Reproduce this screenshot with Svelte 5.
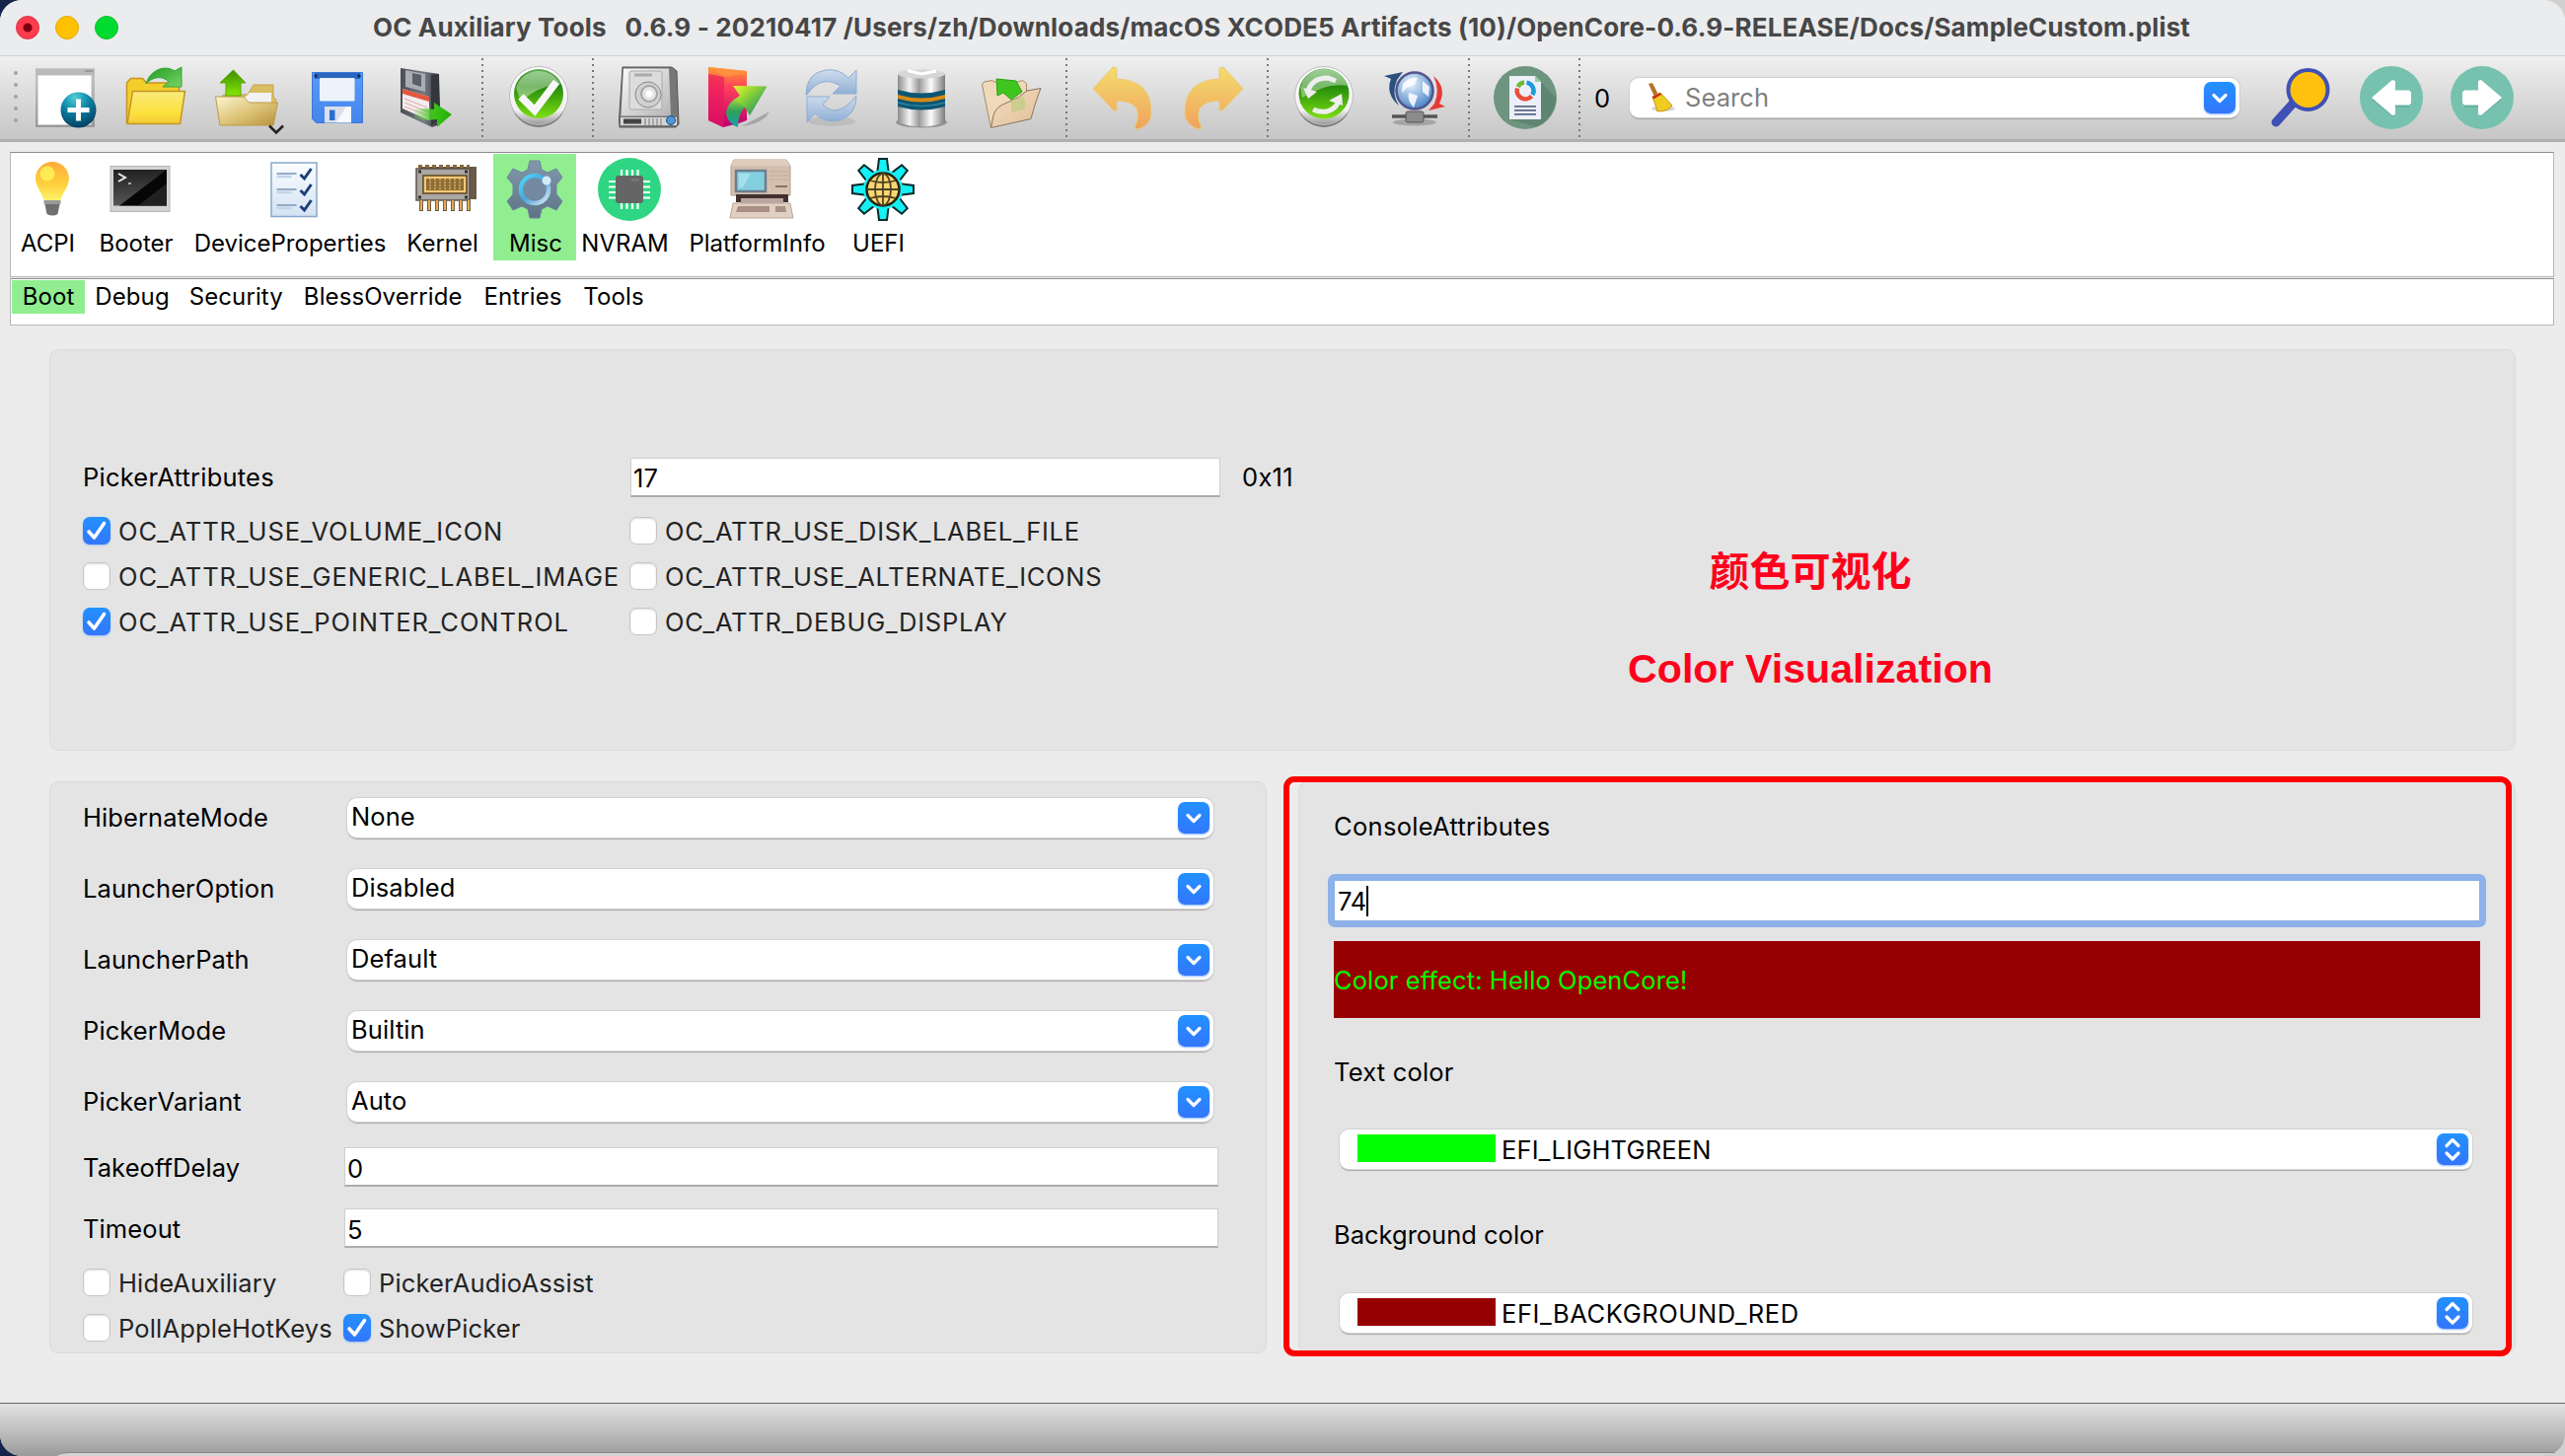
<script>
  const tabs = ['ACPI', 'Booter', 'DeviceProperties', 'Kernel', 'Misc', 'NVRAM', 'PlatformInfo', 'UEFI'];
  const subtabs = ['Boot', 'Debug', 'Security', 'BlessOverride', 'Entries', 'Tools'];
  const attrs = [
    ['OC_ATTR_USE_VOLUME_ICON', true],
    ['OC_ATTR_USE_DISK_LABEL_FILE', false],
    ['OC_ATTR_USE_GENERIC_LABEL_IMAGE', false],
    ['OC_ATTR_USE_ALTERNATE_ICONS', false],
    ['OC_ATTR_USE_POINTER_CONTROL', true],
    ['OC_ATTR_DEBUG_DISPLAY', false]
  ];
  const combos = [
    ['HibernateMode', 'None'],
    ['LauncherOption', 'Disabled'],
    ['LauncherPath', 'Default'],
    ['PickerMode', 'Builtin'],
    ['PickerVariant', 'Auto']
  ];
  const fields = [
    ['TakeoffDelay', '0'],
    ['Timeout', '5']
  ];
  const flags = [
    ['HideAuxiliary', false],
    ['PickerAudioAssist', false],
    ['PollAppleHotKeys', false],
    ['ShowPicker', true]
  ];
</script>

{#snippet check(label, on)}
  <div class="check">
    <span class="box" class:on>
      {#if on}
        <svg viewBox="0 0 28 28"><path d="M6 15l5.500 6L21.500 6.500" fill="none" stroke="#fff" stroke-width="3.600" stroke-linecap="round" stroke-linejoin="round" /></svg>
      {/if}
    </span>
    <span class="clabel">{label}</span>
  </div>
{/snippet}

{#snippet drop()}
  <span class="drop">
    <svg viewBox="0 0 32 32"><path d="M10 13.500l6 6 6-6" fill="none" stroke="#fff" stroke-width="3.200" stroke-linecap="round" stroke-linejoin="round" /></svg>
  </span>
{/snippet}

{#snippet popup(color, name)}
  <div class="popup">
    <span class="swatch {color}"></span>
    <span class="pname {color}name">{name}</span>
    <span class="drop">
      <svg viewBox="0 0 32 32"><path d="M10 12.500l6-6 6 6M10 20l6 6 6-6" fill="none" stroke="#fff" stroke-width="3.200" stroke-linecap="round" stroke-linejoin="round" /></svg>
    </span>
  </div>
{/snippet}

<svg class="defs" aria-hidden="true">
  <defs>
    <linearGradient id="gray" x1="0" y1="0" x2="1" y2="0"><stop offset="0" stop-color="#8d8d8d" /><stop offset=".25" stop-color="#f4f4f4" /><stop offset=".45" stop-color="#9a9a9a" /><stop offset=".7" stop-color="#fdfdfd" /><stop offset="1" stop-color="#7c7c7c" /></linearGradient>
    <linearGradient id="frame" x1="0" y1="0" x2="0" y2="1"><stop offset="0" stop-color="#c8c8c8" /><stop offset="1" stop-color="#999" /></linearGradient>
    <radialGradient id="teal" cx=".4" cy=".15" r=".9"><stop offset="0" stop-color="#4fd0da" /><stop offset=".45" stop-color="#0c83a4" /><stop offset="1" stop-color="#02395c" /></radialGradient>
    <linearGradient id="yellow" x1="0" y1="0" x2="0" y2="1"><stop offset="0" stop-color="#f9ea7c" /><stop offset=".7" stop-color="#fbe03a" /><stop offset="1" stop-color="#f4c93a" /></linearGradient>
    <linearGradient id="green" x1="0" y1="0" x2="1" y2="1"><stop offset="0" stop-color="#1c9a1c" /><stop offset="1" stop-color="#7bd46a" /></linearGradient>
    <linearGradient id="tan" x1="0" y1="0" x2="1" y2="1"><stop offset="0" stop-color="#fbf6cf" /><stop offset=".5" stop-color="#dfc67c" /><stop offset="1" stop-color="#b8923a" /></linearGradient>
    <linearGradient id="up" x1="0" y1="0" x2="0" y2="1"><stop offset="0" stop-color="#3d8f00" /><stop offset="1" stop-color="#86e600" /></linearGradient>
    <linearGradient id="blue" x1="0" y1="0" x2="0" y2="1"><stop offset="0" stop-color="#5b9af6" /><stop offset="1" stop-color="#4385ec" /></linearGradient>
    <linearGradient id="dark" x1="0" y1="0" x2="1" y2="0"><stop offset="0" stop-color="#4a4d55" /><stop offset=".6" stop-color="#777b84" /><stop offset="1" stop-color="#2e3036" /></linearGradient>
    <linearGradient id="go" x1="0" y1="0" x2="1" y2="0"><stop offset="0" stop-color="#7ed66a" stop-opacity=".2" /><stop offset=".5" stop-color="#3fc41c" /><stop offset="1" stop-color="#22ae00" /></linearGradient>
    <linearGradient id="rim" x1="0" y1="0" x2="0" y2="1"><stop offset="0" stop-color="#fff" /><stop offset=".75" stop-color="#f1f1f1" /><stop offset="1" stop-color="#999" /></linearGradient>
    <linearGradient id="orb" x1="0" y1="0" x2="0" y2="1"><stop offset="0" stop-color="#5fae55" /><stop offset=".35" stop-color="#23890b" /><stop offset="1" stop-color="#7ee012" /></linearGradient>
    <linearGradient id="metal" x1="0" y1="0" x2="1" y2="1"><stop offset="0" stop-color="#fafafa" /><stop offset="1" stop-color="#b5b5b5" /></linearGradient>
    <linearGradient id="pink" x1="0" y1="0" x2="0" y2="1"><stop offset="0" stop-color="#ff9a2e" /><stop offset=".35" stop-color="#ff3d5e" /><stop offset="1" stop-color="#b8006e" /></linearGradient>
    <linearGradient id="lime" x1="0" y1="0" x2="1" y2="1"><stop offset="0" stop-color="#eef62a" /><stop offset=".45" stop-color="#7ccb3a" /><stop offset="1" stop-color="#007a80" /></linearGradient>
    <linearGradient id="tail" x1="0" y1="0" x2="0" y2="1"><stop offset="0" stop-color="#b9e23a" /><stop offset=".5" stop-color="#2fa05a" /><stop offset="1" stop-color="#16a3ac" /></linearGradient>
    <linearGradient id="sky" x1="0" y1="0" x2="0" y2="1"><stop offset="0" stop-color="#cfdcec" /><stop offset="1" stop-color="#8eaed6" /></linearGradient>
    <linearGradient id="gold" x1="0" y1="0" x2="0" y2="1"><stop offset="0" stop-color="#f5dc6e" /><stop offset="1" stop-color="#efa25c" /></linearGradient>
    <linearGradient id="paper" x1="0" y1="0" x2="1" y2="1"><stop offset="0" stop-color="#f5dcc0" /><stop offset="1" stop-color="#dfc09a" /></linearGradient>
    <linearGradient id="bulb" x1="0" y1="0" x2="0" y2="1"><stop offset="0" stop-color="#ffab3a" /><stop offset=".6" stop-color="#ffd23e" /><stop offset="1" stop-color="#fff36a" /></linearGradient>
    <linearGradient id="term" x1="0" y1="0" x2="0" y2="1"><stop offset="0" stop-color="#222" /><stop offset="1" stop-color="#555" /></linearGradient>
    <linearGradient id="sheet" x1="0" y1="0" x2="0" y2="1"><stop offset="0" stop-color="#fbfdff" /><stop offset="1" stop-color="#d3e2f3" /></linearGradient>
    <linearGradient id="gearg" x1="0" y1="0" x2="0" y2="1"><stop offset="0" stop-color="#8298ab" /><stop offset="1" stop-color="#5f7387" /></linearGradient>
    <linearGradient id="ringg" x1="0" y1="0" x2="1" y2="1"><stop offset="0" stop-color="#4fd8f7" /><stop offset=".5" stop-color="#49a6dd" /><stop offset="1" stop-color="#dfe9f3" /></linearGradient>
    <radialGradient id="globe" cx=".4" cy=".3" r=".8"><stop offset="0" stop-color="#e8f3fd" /><stop offset="1" stop-color="#3877c0" /></radialGradient>
  </defs>
</svg>

<div class="desktop">
  <div class="window">
    <header class="titlebar">
      <div class="lights"><i class="red"></i><i class="amber"></i><i class="lime"></i></div>
      <h1>OC Auxiliary Tools &nbsp; 0.6.9 - 20210417 /Users/zh/Downloads/macOS XCODE5 Artifacts (10)/OpenCore-0.6.9-RELEASE/Docs/SampleCustom.plist</h1>
    </header>

    <div class="toolbar">
      <div class="grip"><i></i><i></i><i></i><i></i><i></i></div>
      <span class="tool">
        <svg viewBox="0 0 64 64">
          <rect x="2" y="2.500" width="60" height="59.500" fill="url(#frame)" /><rect x="2" y="2.500" width="60" height="7" fill="#b9b9b9" /><path d="M52 5h8" stroke="#8c8c8c" stroke-width="1.500" />
          <rect x="4.500" y="9.500" width="54" height="50" fill="#fff" />
          <circle cx="45.500" cy="44.500" r="18" fill="url(#teal)" /><path d="M45.500 33.500v22M34.500 44.500h22" stroke="#fff" stroke-width="5" />
        </svg>
      </span>
      <span class="tool">
        <svg viewBox="0 0 64 64">
          <path d="M2.500 57V17l4-4.500h12l4 4.500h33v41z" fill="#f3cf2c" stroke="#c79222" stroke-width="1.500" />
          <path d="M8.500 25.500h53L56.500 58.500H3z" fill="url(#yellow)" stroke="#c49423" stroke-width="1.500" />
          <path d="M22 18C26 4 41-2 51 5l7-4v20H39l6-5C39 9 28 11 22 18z" fill="url(#green)" stroke="#36a436" />
        </svg>
      </span>
      <span class="tool">
        <svg viewBox="0 0 64 64">
          <path d="M5 55V32l4-3h24l6-10h20v12l3 3-4 24z" fill="#dbbd62" stroke="#c2a04c" />
          <path d="M29 33l6-6h22v10H29z" fill="#f2f2f2" />
          <path d="M.5 31h28l6 6h29L59 60H5z" fill="url(#tan)" stroke="#bd9a46" />
          <path d="M18.500 4L31 17h-5v13H11V17H5z" fill="url(#up)" stroke="#57a410" />
          <path d="M55 60.500l7 7 7-7" fill="none" stroke="#222" stroke-width="2.500" />
        </svg>
      </span>
      <span class="tool">
        <svg viewBox="0 0 64 64">
          <path d="M6.500 6.500h51v51h-47l-4-4z" fill="url(#blue)" stroke="#3c78d8" />
          <rect x="9" y="7" width="46" height="6" fill="#2a66c0" /><path d="M8.500 8.500h3v3h-3zM52.500 8.500h3v3h-3z" fill="#0c2a60" />
          <rect x="14" y="12" width="35.500" height="23.500" rx="1" fill="#edf3fb" />
          <rect x="19" y="41" width="27" height="16.500" fill="#dbe0ea" /><path d="M31 57l10-16h5v16z" fill="#f7f9fc" /><rect x="24" y="44.500" width="5.500" height="10.500" fill="#2c6fd2" />
        </svg>
      </span>
      <span class="tool">
        <svg viewBox="0 0 64 64">
          <path d="M4 2l39 6 1 33v18L36 62 4 47z" fill="url(#dark)" /><path d="M35 9l8-1v45l-8 8z" fill="#33363d" />
          <path d="M9 4l20 4v18L9 21z" fill="#a9adb4" /><path d="M16 7l9 2v12l-9-3z" fill="#5b5f68" />
          <path d="M6 23l27 8v24L6 43z" fill="#f3eded" /><path d="M6 23l27 8v5L6 28z" fill="#e4573f" />
          <path d="M8 33l23 9M8 37l23 9M8 41l23 9" stroke="#d9a9a4" />
          <path d="M18 44q12-2 20 0v-7l18 12-15 13V54q-12 2-23-1z" fill="url(#go)" />
        </svg>
      </span>
      <span class="sep"></span>
      <span class="tool">
        <svg viewBox="0 0 64 64">
          <ellipse cx="32" cy="34" rx="28" ry="28" fill="#777" /><circle cx="32" cy="30" r="29.500" fill="url(#rim)" stroke="#bbb" /><circle cx="32" cy="28" r="25" fill="url(#orb)" />
          <path d="M9 22a24.500 24.500 0 0 1 45-4q-22 2-40 18z" fill="#fff" opacity=".4" />
          <path d="M14 31l14 14 22-29" fill="none" stroke="#f7f7f7" stroke-width="7.500" />
        </svg>
      </span>
      <span class="sep"></span>
      <span class="tool">
        <svg viewBox="0 0 64 64">
          <path d="M5 1h50l5 4 2 54-3 3H2l-.5-8z" fill="#777" stroke="#555" /><path d="M6 2.500h46l2 48H3.500z" fill="url(#metal)" />
          <rect x="12" y="5" width="33" height="39" rx="2" fill="#dcdcdc" stroke="#aaa" /><path d="M17 9h18" stroke="#aaa" stroke-width="3" />
          <circle cx="31" cy="29" r="13" fill="#d0d0d0" stroke="#888" /><circle cx="32" cy="28" r="8" fill="#e4e4e4" stroke="#a5a5a5" stroke-width="2" /><circle cx="32" cy="28" r="3.500" fill="#fff" />
          <path d="M3 52h57v8H3z" fill="#d5d5d5" /><path d="M6 56h18" stroke="#444" stroke-width="5" /><path d="M28 53v7M32 53v7M36 53v7M40 53v7M44 53v7" stroke="#777" /><circle cx="54" cy="55" r="4.500" fill="#4d95d6" stroke="#1d4f80" />
        </svg>
      </span>
      <span class="tool">
        <svg viewBox="0 0 64 64">
          <path d="M34 61L62 46l-4 6q-10 8-24 9z" fill="#666" opacity=".4" />
          <path d="M0 1l39 4v50l-8 3-16 4L0 55z" fill="url(#pink)" /><path d="M0 8l16 3v51L0 55z" fill="#e8175f" opacity=".65" /><path d="M0 1l39 4-3 3-20 3z" fill="#ff9440" opacity=".8" />
          <path d="M30 62Q19 58 18 47q1-10 14-17l8 9q-10 7-10 23z" fill="url(#tail)" />
          <path d="M25 20l34.500.5L42 50l-5-8-9-7 4-5z" fill="url(#lime)" />
        </svg>
      </span>
      <span class="tool">
        <svg viewBox="0 0 64 64">
          <ellipse cx="33" cy="56" rx="24" ry="5" fill="#777" opacity=".18" />
          <path d="M7 29Q7 7 27 4q13-2 23 8l8-8v24H34l8-8Q22 8 8 29z" fill="url(#sky)" stroke="#8fadd4" />
          <path d="M58 30q0 20-17 25-15 3-25-7l-8 9V31h23l-7 8q15 15 34-9z" fill="url(#sky)" stroke="#8fadd4" />
        </svg>
      </span>
      <span class="tool">
        <svg viewBox="0 0 64 64">
          <ellipse cx="32" cy="57" rx="26" ry="5.500" fill="#777" opacity=".7" /><path d="M8 8v49q24 9 48 0V8z" fill="url(#gray)" />
          <ellipse cx="32" cy="8" rx="24" ry="4.500" fill="#d6d6d6" /><path d="M32 8L18 4.500M32 8l15-3" stroke="#fff" stroke-width="3" />
          <path d="M8 24q24 7 48 0v17q-24 7-48 0z" fill="#0d5673" /><path d="M8 29q24 7 48 0v4q-24 7-48 0z" fill="#d88a12" /><path d="M8 37q24 7 48 0" fill="none" stroke="#2f83a3" stroke-width="1.500" />
        </svg>
      </span>
      <span class="tool">
        <svg viewBox="0 0 64 64">
          <path d="M1.500 19l2-3 8-1.500 4 2 22-.5 5-1.500 4 3v20L10.500 62.500z" fill="#f0d8ba" stroke="#a78a68" />
          <path d="M10.500 62.500L13 50q2-9 14-13 13-5 20-12l14-2.500q-5 12-10 31z" fill="url(#paper)" stroke="#8c735a" stroke-linejoin="round" />
          <path d="M16 13l20 2 6 11-11 8-8-7-6 3z" fill="#3fc61e" stroke="#2ca312" stroke-linejoin="round" /><path d="M31 35l12-4 2 3v10l-14 3z" fill="#b8cc7c" opacity=".6" />
        </svg>
      </span>
      <span class="sep"></span>
      <span class="tool">
        <svg viewBox="0 0 64 64"><path d="M2 23L22 1l4 1v11q36 1 35 36-1 10-13 15l-4-1q12-27-18-28v10h-3z" fill="url(#gold)" stroke="#e8cc7a" /></svg>
      </span>
      <span class="tool">
        <svg viewBox="0 0 64 64"><path d="M62 23L42 1l-4 1v11Q2 14 3 49q1 10 13 15l4-1Q8 36 38 35v10h3z" fill="url(#gold)" stroke="#e8cc7a" /></svg>
      </span>
      <span class="sep"></span>
      <span class="tool">
        <svg viewBox="0 0 64 64">
          <ellipse cx="32" cy="34" rx="28" ry="28" fill="#777" /><circle cx="32" cy="30" r="29.500" fill="url(#rim)" stroke="#bbb" /><circle cx="32" cy="28" r="25.500" fill="url(#orb)" />
          <path d="M8 22a25 25 0 0 1 48-2q-20-4-46 12z" fill="#fff" opacity=".4" />
          <path d="M16 25q4-13 20-13l8 3" fill="none" stroke="#eee" stroke-width="5" /><path d="M11 22l14 4-9 7z" fill="#eee" />
          <path d="M48 32q-2 11-13 14-8 1-14-2" fill="none" stroke="#eee" stroke-width="5" /><path d="M37 35l13-7 1 12z" fill="#eee" />
        </svg>
      </span>
      <span class="tool">
        <svg viewBox="0 0 64 64">
          <path d="M1 10l19-4-6 8q-6 14 2 26-14-12-8-27z" fill="#29507f" /><path d="M51 10q14 12 6 28l6 3-17 4 6-7q6-14-1-28z" fill="#e53a37" />
          <ellipse cx="32" cy="57" rx="22" ry="3.500" fill="#666" opacity=".4" /><path d="M9 51h46" stroke="#555" stroke-width="3.500" /><rect x="23" y="46" width="18" height="11" rx="2" fill="#8b8b8b" stroke="#555" />
          <circle cx="32" cy="25" r="18.500" fill="url(#globe)" stroke="#52548c" stroke-width="2.500" />
          <path d="M20 18q8-8 15-6l-3 7-8 3-5 5zM26 27l9 3-4 12q-7-7-5-15zM40 15l7 6-1 10-6-5z" fill="#fff" opacity=".85" />
        </svg>
      </span>
      <span class="sep"></span>
      <span class="tool">
        <svg viewBox="0 0 64 64">
          <circle cx="32" cy="32" r="32" fill="#6d957f" /><path d="M42 10l21 22a32 32 0 0 1-20 29.500L16 54z" fill="#5d8570" />
          <path d="M16 10h26l6 6v38H16z" fill="#eceff8" /><path d="M42 10v6h6z" fill="#8fd0a0" />
          <path d="M24.600 21A8.500 8.500 0 0 1 31 16.500" fill="none" stroke="#73b62c" stroke-width="4.500" /><path d="M33.500 16.600A8.500 8.500 0 0 1 39.400 29.200" fill="none" stroke="#1f9ad9" stroke-width="4.500" /><path d="M38.500 30.500A8.500 8.500 0 0 1 24 22.500" fill="none" stroke="#e8503a" stroke-width="4.500" />
          <path d="M21 40.800h22M21 44.800h22M21 48.800h22" stroke="#5c6785" stroke-width="1.800" />
        </svg>
      </span>
      <span class="sep"></span>
      <span class="count">0</span>
      <div class="search">
        <svg class="broom" viewBox="0 0 32 32">
          <ellipse cx="18" cy="27" rx="12" ry="3" fill="#777" opacity=".3" /><path d="M3 2l4-1 6 12-4 2z" fill="#b8722a" /><path d="M7 15l8-4 12 13q-4 6-15 6-2-7-5-15z" fill="#f0cc22" stroke="#c79a10" /><path d="M7 15l8-4 1 2-8 4.500z" fill="#c82a1e" />
        </svg>
        <span class="ph">Search</span>
        {@render drop()}
      </div>
      <span class="tool end">
        <svg viewBox="0 0 64 64"><path d="M7 57l18-20" stroke="#3f51b5" stroke-width="9" stroke-linecap="round" /><circle cx="39.500" cy="24" r="20" fill="#ffc10d" stroke="#3f51b5" stroke-width="4" /></svg>
      </span>
      <span class="tool">
        <svg viewBox="0 0 64 64"><circle cx="32" cy="32" r="32" fill="#76c2af" /><path d="M12 34L34 52v-10h16V26H34z" fill="#4f9384" opacity=".35" /><path d="M12 32L33 14l3 1v9.500h14l2 2v11l-2 2H36V49l-3 1z" fill="#fff" /></svg>
      </span>
      <span class="tool">
        <svg viewBox="0 0 64 64"><circle cx="32" cy="32" r="32" fill="#76c2af" /><path d="M52 34L30 52v-10H14V26h16z" fill="#4f9384" opacity=".35" /><path d="M52 32L31 14l-3 1v9.500H14l-2 2v11l2 2h14V49l3 1z" fill="#fff" /></svg>
      </span>
    </div>

    <nav class="tabs">
      {#each tabs as tab}
        <div class="tab" class:active={tab === 'Misc'}>
          <svg viewBox="0 0 64 64">
            {#if tab === 'ACPI'}
              <path d="M32 4c10 0 17 8 17 17 0 8-7 15-8.500 22h-17C22 36 15 29 15 21 15 12 22 4 32 4z" fill="url(#bulb)" /><circle cx="27" cy="16" r="7.500" fill="#ffef55" opacity=".9" />
              <path d="M23.500 43h17v4h-17z" fill="#9a9a9a" /><path d="M24.500 47h15l-2 10q-5 3-11 0z" fill="#6f6f6f" />
            {:else if tab === 'Booter'}
              <rect x="2" y="8.500" width="60" height="46" fill="#d3d3d3" stroke="#b5b5b5" /><rect x="5" y="12" width="54" height="36.500" fill="url(#term)" /><path d="M59 12v36.500H11z" fill="#060606" /><path d="M30 48.500L59 26v22.500z" fill="#333" opacity=".6" />
              <path d="M10 16l7 4-7 4" fill="none" stroke="#eee" stroke-width="2" /><path d="M20 26h3" stroke="#aaa" stroke-width="2" />
            {:else if tab === 'DeviceProperties'}
              <rect x="9" y="5" width="46" height="54.500" fill="url(#sheet)" stroke="#88a7ca" stroke-width="1.500" />
              <path d="M14.500 16h20M14.500 32h20M14.500 48h20" stroke="#91abc9" stroke-width="2" /><path d="M14.500 19h15M14.500 35h15M14.500 51h15" stroke="#c3d4e6" stroke-width="2.500" />
              <path d="M38.500 17l4 4 7-10M38.500 33l4 4 7-10M38.500 49l4 4 7-10" fill="none" stroke="#1d3f78" stroke-width="3" />
            {:else if tab === 'Kernel'}
              <path d="M4 9h58v33H4z" fill="#6a5a49" /><rect x="1" y="11" width="54" height="32" fill="#aaa6a2" stroke="#5d5247" stroke-width="1.500" /><path d="M3 8.500h52" stroke="#8a6a3a" stroke-width="3" stroke-dasharray="4 3" />
              <rect x="8" y="18" width="44" height="18" fill="#f3c878" stroke="#5e4521" stroke-width="1.500" /><rect x="11" y="21" width="38" height="12" fill="#8d6c35" /><path d="M15 21v12M20 21v12M25 21v12M30 21v12M35 21v12M40 21v12M45 21v12" stroke="#dcae61" stroke-width="1.500" stroke-dasharray="2 1" />
              <path d="M3 14h3M50 14h3M3 40h3M50 40h3" stroke="#333" stroke-width="3" />
              <path d="M6 43v11M14 43v11M22 43v11M30 43v11M38 43v11M46 43v11M54 43v11" stroke="#6a5a45" stroke-width="4" /><path d="M6 43v10M14 43v10M22 43v10M30 43v10M38 43v10M46 43v10M54 43v10" stroke="#e5a851" stroke-width="2.200" />
            {:else if tab === 'Misc'}
              <path d="M27 3h10l2 9 6 3 9-4 6 9-6 7v10l6 7-6 9-9-4-6 3-2 9H27l-2-9-6-3-9 4-6-9 6-7V27l-6-7 6-9 9 4 6-3z" fill="url(#gearg)" stroke="#6f8497" stroke-linejoin="round" />
              <circle cx="32" cy="32" r="14" fill="#7289a0" stroke="url(#ringg)" stroke-width="4.500" /><circle cx="44" cy="23" r="4.500" fill="#cfeaf8" />
            {:else if tab === 'NVRAM'}
              <circle cx="32" cy="32" r="32" fill="#2ed582" /><path d="M24 12v40M29.500 12v40M35 12v40M40.500 12v40M11 24h42M11 29.500h42M11 35h42M11 40.500h42" stroke="#fff" stroke-width="2.200" /><rect x="18" y="18" width="28" height="28" rx="3" fill="#656565" /><path d="M34 22.500h8" stroke="#7c7c7c" stroke-width="2" />
            {:else if tab === 'PlatformInfo'}
              <path d="M4 2h53l4 6v30H1V8z" fill="#d4bfae" stroke="#b39c8b" /><path d="M4 2h53l4 6H1z" fill="#dfcdbe" />
              <rect x="6" y="13" width="30" height="21" fill="#83cfe0" stroke="#6e7d8a" stroke-width="2.500" /><path d="M9 16h12l-8 14H9z" fill="#b4e7ee" opacity=".7" />
              <path d="M39 14h20M39 18h20M39 22h20" stroke="#c2ab9a" /><path d="M46 29h12" stroke="#6b5b52" stroke-width="1.500" />
              <path d="M6 37h53v8H6z" fill="#42302f" /><path d="M11 41h43v5H11z" fill="#b9a6a0" /><path d="M3 46h58l3 15H0z" fill="#e0d0c3" stroke="#bda797" /><path d="M8 49h32v6H6zM46 49h10l1 6H46z" fill="#a98f83" />
            {:else}
              <g fill="#14f0f4" stroke="#0a2a2c" stroke-width="2">
                {#each [0, 45, 90, 135, 180, 225, 270, 315] as a}
                  <path d="M26 17L28 1h8l2 16" transform="rotate({a} 32 32)" />
                {/each}
              </g>
              <circle cx="32" cy="32" r="20" fill="#14f0f4" /><circle cx="32" cy="32" r="16.500" fill="#fad673" stroke="#29220f" stroke-width="2.500" />
              <path d="M32 16v32M16 32h32M19 23q13 4 26 0M19 41q13-4 26 0" fill="none" stroke="#4f4220" stroke-width="1.800" /><ellipse cx="32" cy="32" rx="8" ry="16" fill="none" stroke="#4f4220" stroke-width="1.800" />
            {/if}
          </svg>
          <span>{tab}</span>
        </div>
      {/each}
    </nav>

    <nav class="subtabs">
      {#each subtabs as tab, i}
        <span class:active={i === 0}>{tab}</span>
      {/each}
    </nav>

    <main>
      <section class="group picker">
        <div class="pickgrid">
          <span class="label">PickerAttributes</span>
          <div class="pickval"><span class="input">17</span><span class="hex">0x11</span></div>
          {#each attrs as [label, on]}
            {@render check(label, on)}
          {/each}
        </div>
        <div class="note">
          <p class="zh">颜色可视化</p>
          <p class="en">Color Visualization</p>
        </div>
      </section>

      <div class="lower">
        <section class="group form">
          {#each combos as [label, value]}
            <div class="row">
              <span class="label">{label}</span>
              <div class="combo"><span>{value}</span>{@render drop()}</div>
            </div>
          {/each}
          <div class="fields">
            {#each fields as [label, value]}
              <span class="label">{label}</span>
              <span class="input">{value}</span>
            {/each}
          </div>
          <div class="flags">
            {#each flags as [label, on]}
              {@render check(label, on)}
            {/each}
          </div>
        </section>

        <section class="group console">
          <span class="label wide">ConsoleAttributes</span>
          <div class="focus"><span>74</span><i></i></div>
          <div class="effect">Color effect: Hello OpenCore!</div>
          <span class="label text">Text color</span>
          {@render popup('g', 'EFI_LIGHTGREEN')}
          <span class="label back">Background color</span>
          {@render popup('r', 'EFI_BACKGROUND_RED')}
          <div class="callout"></div>
        </section>
      </div>
    </main>

    <footer><div class="behind"></div></footer>
  </div>
</div>

<style>
  :global(body) {
    margin: 0;
  }
  .defs {
    position: absolute;
    width: 0;
    height: 0;
  }
  .desktop {
    width: 2600px;
    height: 1476px;
    background: linear-gradient(90deg, #16244a 0 50%, #d0d0d0 50%);
    overflow: hidden;
    font-family: Inter, 'Noto Sans CJK SC', sans-serif;
    font-size: 25.5px;
    letter-spacing: 0.1px;
    color: #000;
  }
  .desktop * {
    box-sizing: border-box;
  }
  .window {
    display: flex;
    flex-direction: column;
    height: 1476px;
    background: #ececec;
    border-radius: 22px;
    overflow: hidden;
  }
  .titlebar {
    display: flex;
    align-items: center;
    height: 57px;
    flex: none;
    padding-left: 16px;
    background: #ebecee;
    border-bottom: 1px solid #d3d3d3;
  }
  .lights {
    display: flex;
    gap: 16px;
    width: 362px;
    flex: none;
  }
  .lights i {
    width: 24px;
    height: 24px;
    border-radius: 50%;
  }
  .lights .red {
    background: radial-gradient(circle, #7c0010 0 4px, #ff3b4e 5px);
    border: 1px solid #e0293e;
  }
  .lights .amber {
    background: #ffc100;
    border: 1px solid #e2a900;
  }
  .lights .lime {
    background: #00dc2f;
    border: 1px solid #08bd2c;
  }
  h1 {
    margin: -1px 0 0;
    font-size: 26px;
    font-weight: 700;
    line-height: 30px;
    white-space: nowrap;
    color: #474747;
    letter-spacing: 0.15px;
  }
  .toolbar {
    display: flex;
    align-items: center;
    flex: none;
    height: 87px;
    background: linear-gradient(#efefef, #c6c6c6);
    border-bottom: 3px solid #b0b0b0;
  }
  .grip {
    display: flex;
    flex-direction: column;
    gap: 8px;
    width: 20px;
    padding-left: 14px;
    margin-top: -2px;
  }
  .grip i {
    width: 4px;
    height: 4px;
    border-radius: 50%;
    background: #a2a2a2;
  }
  .tool {
    display: flex;
    justify-content: center;
    width: 92px;
    flex: none;
  }
  .tool svg,
  .tab svg {
    width: 64px;
    height: 64px;
    overflow: visible;
    flex: none;
  }
  .sep {
    width: 20px;
    height: 80px;
    flex: none;
    background: repeating-linear-gradient(#777 0 2px, transparent 2px 6px) 8px 0 / 2px 80px no-repeat;
  }
  .count {
    width: 40px;
    padding-left: 4px;
    text-align: left;
    flex: none;
  }
  .search {
    display: flex;
    align-items: center;
    width: 618px;
    height: 40px;
    padding: 0 4px 0 16px;
    border-radius: 9px;
    background: #fff;
    box-shadow: 0 0 0 1px #cdcdcd, 0 2px 1px #a5a5a5;
    color: #7f7f7f;
    margin-top: -1px;
  }
  .broom {
    width: 32px;
    height: 32px;
    margin-right: 8px;
  }
  .ph {
    flex: 1;
  }
  .end {
    margin-left: 16px;
  }
  .drop {
    width: 32px;
    height: 32px;
    flex: none;
    border-radius: 7px;
    background: linear-gradient(#2391ff, #3376fb);
    box-shadow: 0 1px 2px #8ab8ff;
  }
  .drop svg,
  .box svg {
    display: block;
  }
  .tabs,
  .subtabs {
    display: grid;
    margin: 0 11px 0 10px;
    background: #fff;
    border: 1px solid #b7b7b7;
    border-top: 1px solid #8c8c8c;
    font-size: 24px;
    letter-spacing: 0;
    padding-left: 1px;
    flex: none;
  }
  .tabs {
    grid-template-columns: 73px 106px 206px 103px 84px 99px 169px 77px;
    height: 127px;
    margin-top: 10px;
    padding-top: 1px;
  }
  .tab {
    display: flex;
    flex-direction: column;
    align-items: center;
    height: 108px;
    padding-top: 4px;
  }
  .tab svg {
    margin-left: 8px;
  }
  .tab span {
    margin-top: 8px;
    line-height: 30px;
  }
  .active {
    background: #90ee90;
  }
  .tab.active svg {
    margin-left: 0;
  }
  .tab.active span {
    padding-left: 2px;
  }
  .subtabs {
    grid-template-columns: 74px 96px 114.5px 183.5px 100px 84px;
    height: 48px;
    margin-top: 1px;
    padding-top: 1px;
    letter-spacing: 0.1px;
  }
  .subtabs span {
    height: 34px;
    line-height: 34px;
    text-align: center;
  }
  main {
    padding: 24px 50px 0;
    flex: 1;
  }
  .group {
    background: #e4e4e4;
    border: 1px solid #dadada;
    border-radius: 9px;
  }
  .picker {
    display: flex;
    height: 407px;
    padding: 108px 0 0 33px;
  }
  .pickgrid {
    display: grid;
    grid-template-columns: 554px 660px;
    grid-template-rows: 52px 46px 46px 46px;
    align-content: start;
    flex: none;
    white-space: nowrap;
  }
  .pickval {
    display: flex;
    align-items: center;
    height: 41px;
    padding-left: 1px;
  }
  .pickgrid > .label {
    line-height: 41px;
    letter-spacing: 0.22px;
  }
  .input {
    height: 40px;
    line-height: 40px;
    background: #fff;
    border: 1px solid #cfcfcf;
    border-bottom: 2px solid #acacac;
    padding-left: 2px;
  }
  .pickval .input {
    width: 598px;
    flex: none;
  }
  .hex {
    margin-left: 22px;
    letter-spacing: 0.3px;
  }
  .check {
    display: flex;
    align-items: center;
    height: 46px;
    color: #232323;
    white-space: nowrap;
  }
  .pickgrid .check:nth-child(odd) {
    letter-spacing: 0.92px;
  }
  .pickgrid .check:nth-child(even) {
    letter-spacing: 0.73px;
  }
  .box {
    width: 28px;
    height: 28px;
    flex: none;
    margin-right: 8px;
    border-radius: 7px;
    background: #fff;
    border: 1px solid #c6c6c6;
    box-shadow: inset 0 1px 2px #ddd;
  }
  .box.on {
    border: 0;
    background: linear-gradient(#2391ff, #3376fb);
    box-shadow: 0 1px 2px #9cc0f5;
  }
  .note {
    margin-left: 327px;
    width: 420px;
    padding-top: 83px;
    color: #ff001c;
    text-align: center;
    white-space: nowrap;
    letter-spacing: 0;
  }
  .note p {
    margin: 0;
  }
  .zh {
    font-family: 'Noto Sans CJK SC', sans-serif;
    font-size: 41px;
    font-weight: 700;
    line-height: 60px;
  }
  .note .en {
    font-family: 'Liberation Sans', sans-serif;
    font-size: 41.2px;
    font-weight: 700;
    line-height: 60px;
    margin-top: 42px;
  }
  .lower {
    display: grid;
    grid-template-columns: 1234px 1234px;
    justify-content: space-between;
    margin-top: 31px;
  }
  .form,
  .console {
    height: 580px;
  }
  .form {
    padding: 15px 0 0 33px;
  }
  .row {
    display: grid;
    grid-template-columns: 267px 880px;
    height: 72px;
    align-items: start;
  }
  .row .label {
    line-height: 41px;
  }
  .combo {
    display: flex;
    align-items: center;
    justify-content: space-between;
    width: 878px;
    height: 40px;
    margin-top: 1px;
    padding: 0 4px;
    margin-left: 1px;
    background: #fff;
    border-radius: 10px;
    box-shadow: 0 0 0 1px #d2d2d2, 0 2px 1px #a8a8a8;
  }
  .combo > span:first-child {
    margin-top: -3px;
  }
  .fields {
    display: grid;
    grid-template-columns: 265px 886px;
    row-gap: 22px;
    margin-top: -5px;
    line-height: 41px;
  }
  .fields .label {
    height: 40px;
  }
  .fields .input {
    line-height: 41px;
  }
  .flags {
    display: grid;
    grid-template-columns: 264px 400px;
    margin-top: 12px;
  }
  .flags .check {
    letter-spacing: 0.15px;
  }
  .console {
    display: flex;
    flex-direction: column;
    position: relative;
    padding: 28px 0 0 35px;
  }
  .console .label {
    line-height: 34px;
  }
  .console .wide {
    letter-spacing: 0.3px;
  }
  .focus {
    display: flex;
    align-items: center;
    width: 1174px;
    height: 54px;
    margin: 31px 0 0 -6px;
    padding-left: 3px;
    border: 7px solid #8db1e9;
    border-radius: 7px;
    background: #fff;
    letter-spacing: -0.2px;
  }
  .focus i {
    width: 2px;
    height: 31px;
    background: #000;
  }
  .effect {
    width: 1162px;
    height: 78px;
    line-height: 79px;
    margin-top: 14px;
    background: #970000;
    color: #00ff00;
  }
  .console .text {
    margin: 38px 0 41px;
    letter-spacing: 0.2px;
  }
  .console .back {
    margin: 50px 0 42px;
    letter-spacing: 0;
  }
  .popup {
    display: flex;
    align-items: center;
    width: 1148px;
    height: 40px;
    margin-left: 6px;
    padding: 0 4px 0 18px;
    background: #fff;
    border-radius: 9px;
    box-shadow: 0 0 0 1px #d2d2d2, 0 2px 1px #a8a8a8;
  }
  .swatch {
    width: 140px;
    height: 28px;
    margin: -3px 6px 0 0;
  }
  .g {
    background: #00ff00;
  }
  .r {
    background: #970000;
  }
  .pname {
    flex: 1;
    letter-spacing: 0.2px;
  }
  .rname {
    letter-spacing: 0.58px;
  }
  .callout {
    position: absolute;
    left: -16px;
    top: -6px;
    width: 1245px;
    height: 588px;
    border: 6px solid #ff0000;
    border-radius: 11px;
  }
  footer {
    display: flex;
    align-items: flex-end;
    flex: none;
    height: 54px;
    padding-left: 58px;
    border-top: 1px solid #686868;
    background: linear-gradient(#e2e2e2, #c0c0c0 50%, #9a9a9a);
  }
  .behind {
    flex: 1;
    height: 4px;
    border-top: 1px solid #858585;
    border-top-left-radius: 14px 4px;
    background: #d2d2d2;
  }
</style>
